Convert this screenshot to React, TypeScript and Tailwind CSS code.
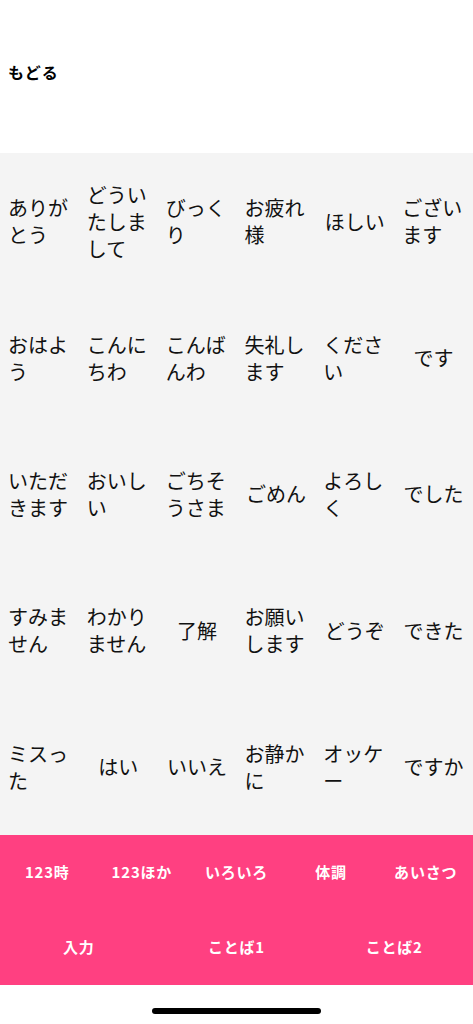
import React from 'react';

const words: string[] = [
  'ありがとう', 'どういたしまして', 'びっくり', 'お疲れ様', 'ほしい', 'ございます',
  'おはよう', 'こんにちわ', 'こんばんわ', '失礼します', 'ください', 'です',
  'いただきます', 'おいしい', 'ごちそうさま', 'ごめん', 'よろしく', 'でした',
  'すみません', 'わかりません', '了解', 'お願いします', 'どうぞ', 'できた',
  'ミスった', 'はい', 'いいえ', 'お静かに', 'オッケー', 'ですか',
];

const tabsTop = ['123時', '123ほか', 'いろいろ', '体調', 'あいさつ'];
const tabsBottom = ['入力', 'ことば1', 'ことば2'];

const font = { fontFamily: '"Noto Sans CJK JP", "Noto Sans", sans-serif' };

const App: React.FC = () => {
  return (
    <div className="w-[473px] h-[1024px] bg-white flex flex-col overflow-hidden" style={font}>
      <header className="h-[153px] shrink-0 px-2 pt-[60px]">
        <button className="text-[16px] leading-6 font-bold tracking-[1px] text-black">もどる</button>
      </header>

      <main className="h-[682px] shrink-0 bg-[#f4f4f4] grid grid-cols-6 grid-rows-5">
        {words.map((w) => (
          <button key={w} className="flex items-center justify-center px-2">
            <span className="text-[20px] leading-[27px] text-[#111] text-left break-all">{w}</span>
          </button>
        ))}
      </main>

      <nav className="h-[150px] shrink-0 bg-[#ff4081] flex flex-col">
        <div className="h-[75px] grid grid-cols-5">
          {tabsTop.map((t) => (
            <button key={t} className="flex items-center justify-center text-[15px] font-bold tracking-[0.8px] text-white">
              {t}
            </button>
          ))}
        </div>
        <div className="h-[75px] grid grid-cols-3">
          {tabsBottom.map((t) => (
            <button key={t} className="flex items-center justify-center text-[15px] font-bold tracking-[0.8px] text-white">
              {t}
            </button>
          ))}
        </div>
      </nav>

      <div className="flex-1 flex justify-center pt-[23px]">
        <div className="w-[169px] h-[6px] rounded-full bg-black" />
      </div>
    </div>
  );
};

export default App;
